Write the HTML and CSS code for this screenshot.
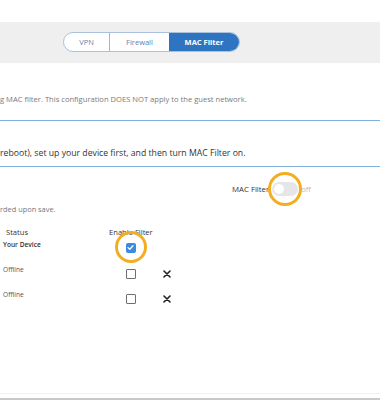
FILE: index.html
```html
<!DOCTYPE html>
<html lang="en">
<head>
    <meta charset="UTF-8">
    <meta name="viewport" content="width=device-width, initial-scale=1.0">
    <title>MAC Filter</title>
    <link rel="stylesheet" href="styles.css">
</head>
<body>
    <div class="page">
        <!-- Sub navigation -->
        <div class="subnav">
            <div class="segmented">
                <a class="seg seg-vpn">VPN</a>
                <a class="seg seg-fw">Firewall</a>
                <a class="seg seg-mac active">MAC Filter</a>
            </div>
        </div>

        <p class="intro">g MAC filter. This configuration DOES NOT apply to the guest network.</p>
        <hr class="rule">
        <p class="notice">reboot), set up your device first, and then turn MAC Filter on.</p>
        <hr class="rule rule-second">

        <div class="switch-row">
            <span class="switch-label">MAC Filter</span>
            <span class="toggle">
                <span class="knob"></span>
                <span class="highlight highlight-toggle"></span>
            </span>
            <span class="switch-state">off</span>
        </div>

        <p class="hint">rded upon save.</p>

        <div class="devices">
            <div class="th th-status">Status</div>
            <div class="th th-filter">Enable Filter</div>
            <div class="th"></div>

            <div class="td td-status own">Your Device</div>
            <div class="td td-filter">
                <span class="check checked">
                    <svg width="9" height="9" viewBox="0 0 9 9"><path d="M2 4.6 L3.8 6.3 L7 2.8" fill="none" stroke="#fff" stroke-width="1.3" stroke-linecap="round" stroke-linejoin="round"/></svg>
                    <span class="highlight highlight-check"></span>
                </span>
            </div>
            <div class="td"></div>

            <div class="td td-status">Offline</div>
            <div class="td td-filter"><span class="check"></span></div>
            <div class="td td-del">
                <svg width="8" height="8" viewBox="0 0 8 8"><path d="M1 1 L7 7 M7 1 L1 7" stroke="#222" stroke-width="1.6" stroke-linecap="round"/></svg>
            </div>

            <div class="td td-status">Offline</div>
            <div class="td td-filter"><span class="check"></span></div>
            <div class="td td-del">
                <svg width="8" height="8" viewBox="0 0 8 8"><path d="M1 1 L7 7 M7 1 L1 7" stroke="#222" stroke-width="1.6" stroke-linecap="round"/></svg>
            </div>
        </div>

        <div class="footer">
            <div class="footer-bar"></div>
        </div>
    </div>
</body>
</html>
```

FILE: styles.css
```css
/* General Styles */
body {
    margin: 0;
    padding: 0;
    font-family: 'Open Sans', 'Liberation Sans', sans-serif;
    background: #fff;
    color: #333;
    overflow: hidden;
}

.page {
    width: 380px;
    height: 400px;
    display: flex;
    flex-direction: column;
}

/* Sub navigation */
.subnav {
    margin-top: 22px;
    height: 41px;
    background: #efefef;
    display: flex;
    align-items: center;
    padding-left: 63px;
}

.segmented {
    display: flex;
    height: 20px;
    margin-top: -2px;
    border: 1px solid #a9c1dc;
    border-radius: 11px;
    background: #fff;
    overflow: hidden;
    box-sizing: border-box;
}

.seg {
    display: flex;
    align-items: center;
    justify-content: center;
    font-size: 7.5px;
    color: #5b86b3;
}

.seg-vpn {
    width: 45px;
    border-right: 1px solid #a9b6c4;
}

.seg-fw {
    width: 59px;
}

.seg-mac {
    width: 70px;
}

.seg.active {
    background: #2f74c1;
    color: #fff;
    font-weight: 700;
}

/* Intro texts */
.intro {
    margin: 31px 0 0;
    font-size: 7.6px;
    line-height: 10px;
    color: #7a7a7a;
    white-space: nowrap;
}

.rule {
    margin: 16px 0 0;
    border: 0;
    border-top: 1.5px solid #7db0df;
}

.notice {
    margin: 26px 0 0;
    font-size: 8.7px;
    line-height: 12px;
    color: #333;
    white-space: nowrap;
}

.rule-second {
    margin-top: 7px;
}

/* MAC filter switch */
.switch-row {
    display: flex;
    align-items: center;
    height: 20px;
    margin-top: 12px;
    padding-left: 232px;
}

.switch-label {
    font-size: 7.8px;
    color: #333;
}

.toggle {
    position: relative;
    width: 26px;
    height: 14px;
    margin-left: 3px;
    border-radius: 7px;
    background: #e6e6e8;
}

.knob {
    position: absolute;
    left: 2px;
    top: 2px;
    width: 10px;
    height: 10px;
    border-radius: 50%;
    background: #fff;
}

.switch-state {
    margin-left: 3px;
    font-size: 7.5px;
    color: #b8b8b8;
}

/* Orange annotation rings */
.highlight {
    position: absolute;
    border: 3px solid #f3ad1e;
    border-radius: 50%;
    box-sizing: border-box;
}

.highlight-toggle {
    left: -4px;
    top: -10px;
    width: 34px;
    height: 34px;
}

.highlight-check {
    left: -11px;
    top: -12px;
    width: 32px;
    height: 32px;
}

.hint {
    margin: 5px 0 0;
    font-size: 7.4px;
    line-height: 10px;
    color: #777;
}

/* Device table */
.devices {
    display: grid;
    grid-template-columns: 109px 54px 1fr;
    grid-auto-rows: 25px;
    grid-template-rows: 13px;
    margin-top: 13px;
}

.th {
    font-size: 7.6px;
    line-height: 10px;
    color: #333;
}

.th-status {
    padding-left: 6px;
}

.td {
    display: flex;
    align-items: flex-start;
}

.td-status {
    padding-left: 3px;
    font-size: 6.6px;
    line-height: 10px;
    color: #555;
}

.td-status.own {
    font-weight: 600;
    color: #333;
}

.td-filter {
    padding-left: 17px;
}

.check {
    position: relative;
    width: 10px;
    height: 10px;
    margin-top: 4px;
    border: 1px solid #6f6f6f;
    border-radius: 1px;
    box-sizing: border-box;
}

.check.checked {
    margin-top: 3px;
    border: 0;
    background: #3a8ae0;
    border-radius: 2px;
}

.check.checked svg {
    display: block;
}

.td-del {
    padding-top: 5px;
}

/* Footer */
.footer {
    margin-top: auto;
    border-top: 1px solid #f1f1f1;
    padding-top: 4px;
}

.footer-bar {
    height: 2px;
    background: #c8c8c8;
}
```
